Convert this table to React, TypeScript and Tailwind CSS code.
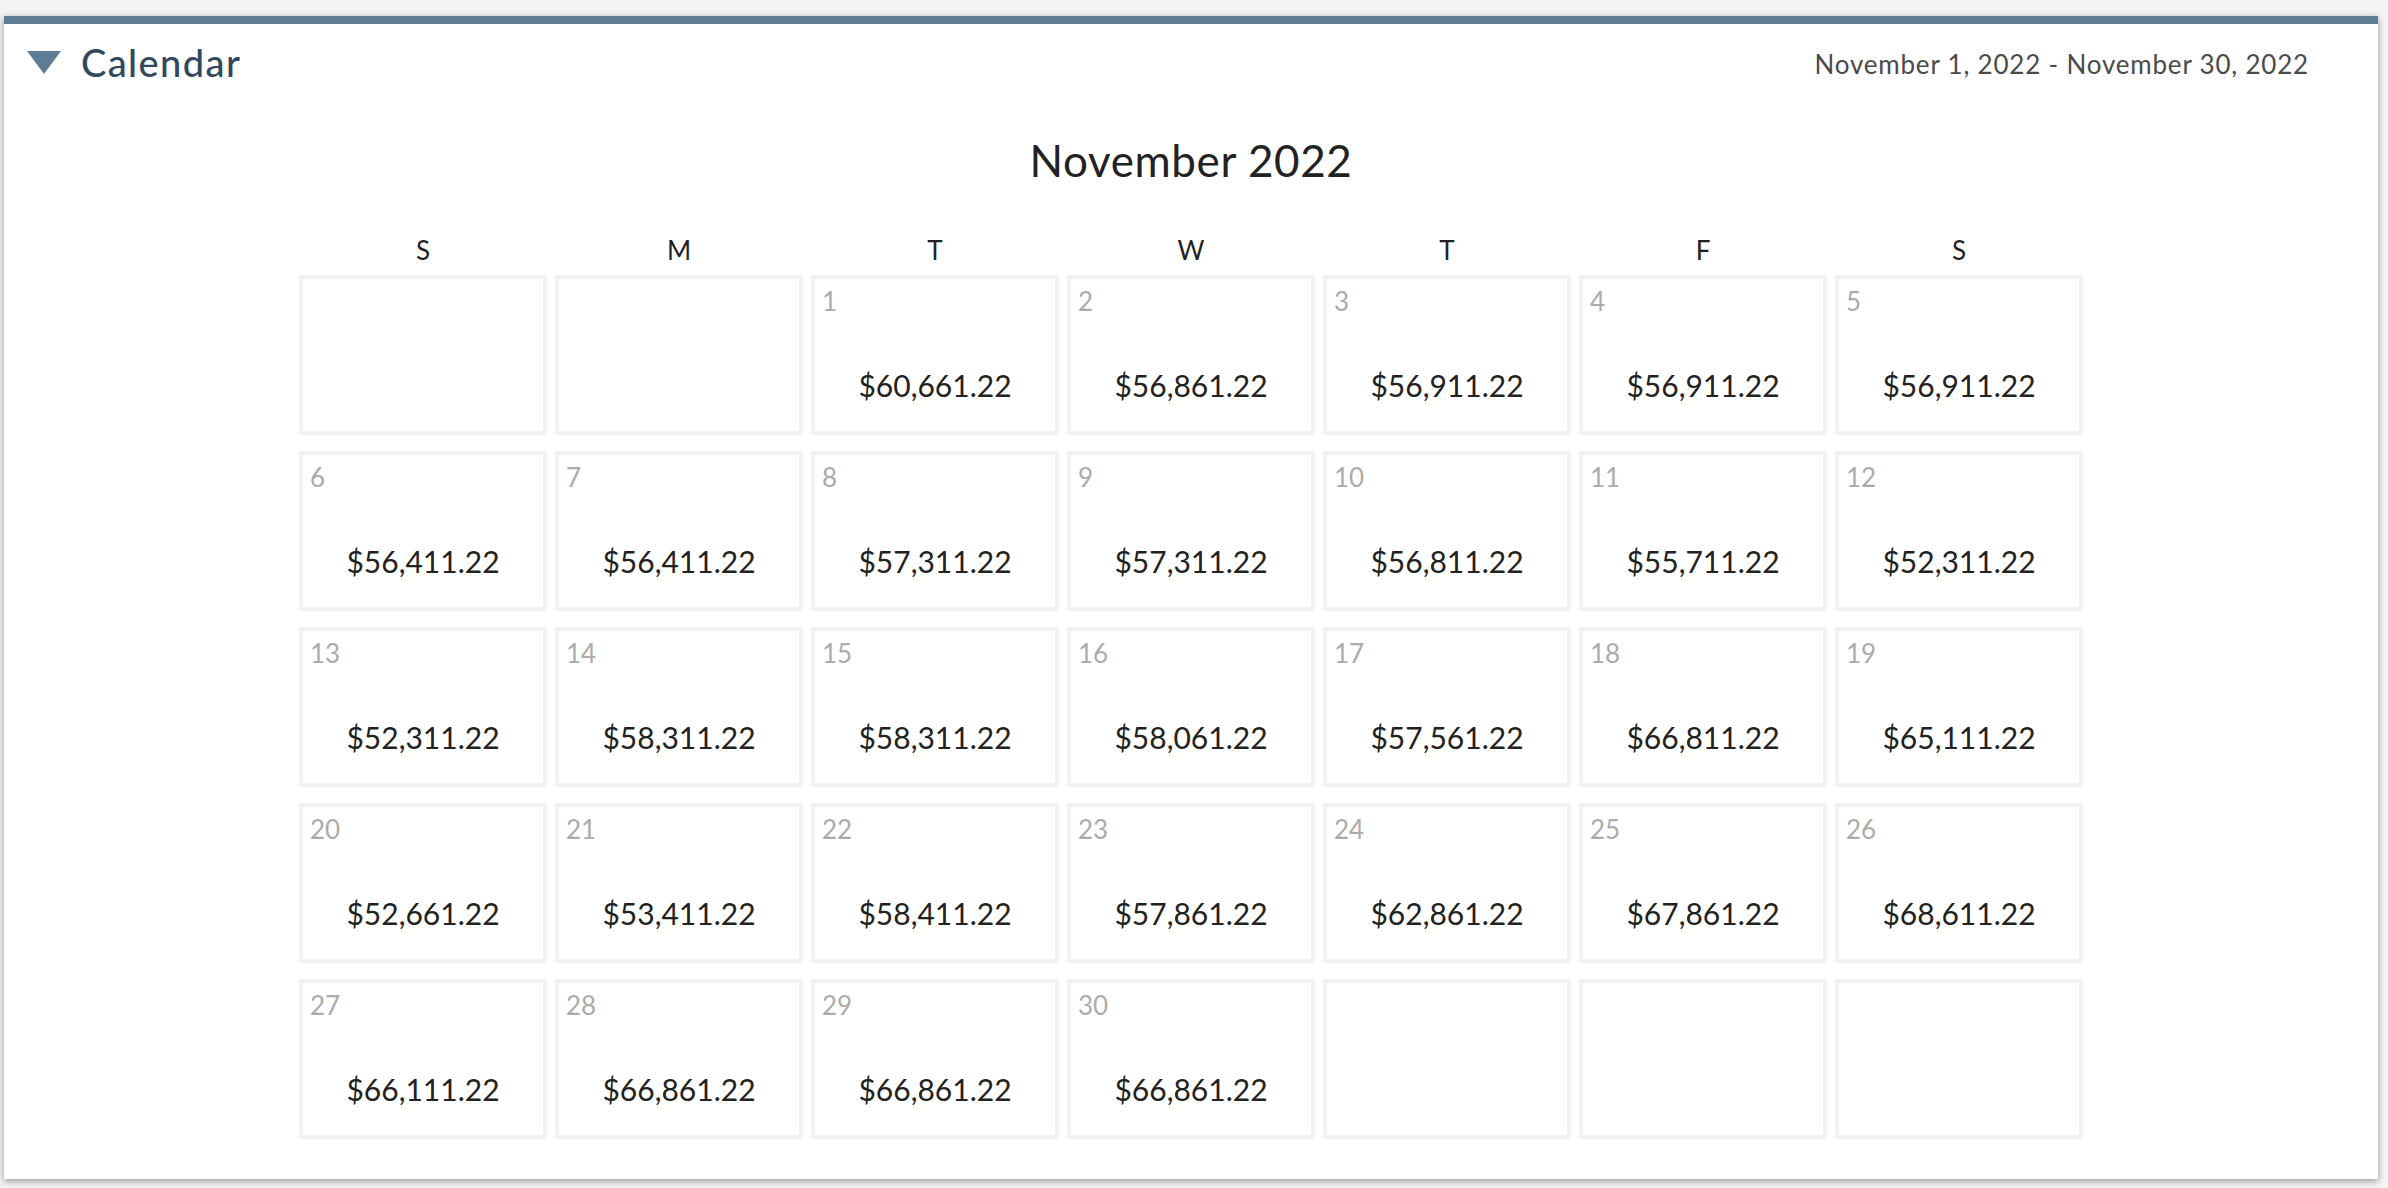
import React from "react";

type Day = { n: number; amount: string } | null;

const weeks: Day[][] = [
  [null, null, { n: 1, amount: "$60,661.22" }, { n: 2, amount: "$56,861.22" }, { n: 3, amount: "$56,911.22" }, { n: 4, amount: "$56,911.22" }, { n: 5, amount: "$56,911.22" }],
  [{ n: 6, amount: "$56,411.22" }, { n: 7, amount: "$56,411.22" }, { n: 8, amount: "$57,311.22" }, { n: 9, amount: "$57,311.22" }, { n: 10, amount: "$56,811.22" }, { n: 11, amount: "$55,711.22" }, { n: 12, amount: "$52,311.22" }],
  [{ n: 13, amount: "$52,311.22" }, { n: 14, amount: "$58,311.22" }, { n: 15, amount: "$58,311.22" }, { n: 16, amount: "$58,061.22" }, { n: 17, amount: "$57,561.22" }, { n: 18, amount: "$66,811.22" }, { n: 19, amount: "$65,111.22" }],
  [{ n: 20, amount: "$52,661.22" }, { n: 21, amount: "$53,411.22" }, { n: 22, amount: "$58,411.22" }, { n: 23, amount: "$57,861.22" }, { n: 24, amount: "$62,861.22" }, { n: 25, amount: "$67,861.22" }, { n: 26, amount: "$68,611.22" }],
  [{ n: 27, amount: "$66,111.22" }, { n: 28, amount: "$66,861.22" }, { n: 29, amount: "$66,861.22" }, { n: 30, amount: "$66,861.22" }, null, null, null],
];

const weekdays = ["S", "M", "T", "W", "T", "F", "S"];

function DayCell({ day }: { day: Day }) {
  return (
    <div className="h-[160px] border-4 border-[#f2f2f2] bg-white flex flex-col">
      {day && (
        <>
          <div className="pl-[7px] pt-[9px] text-[26px] leading-[26px] text-[#ababab]">{day.n}</div>
          <div className="mt-[56px] text-center text-[30px] leading-[30px] text-[#222]">{day.amount}</div>
        </>
      )}
    </div>
  );
}

export default function App() {
  return (
    <div className="min-h-screen bg-[#f4f4f4] pt-4 pl-1 pr-[10px] font-['Lato','Liberation_Sans',sans-serif]">
      <div className="bg-white border-t-8 border-[#5f7e96] shadow-[0_2px_7px_rgba(0,0,0,0.4)] h-[1163px]">
        <div className="flex h-[76px] items-center justify-between pl-[23px] pr-[69px]">
          <div className="flex items-center gap-5">
            <svg width="34" height="23" viewBox="0 0 34 23">
              <polygon points="0,0 34,0 17,23" fill="#5f7e96" />
            </svg>
            <span className="text-[38px] tracking-[1.4px] font-medium text-[#30495c]">Calendar</span>
          </div>
          <span className="pt-1 text-[26px] tracking-[0.8px] text-[#4a4a4a]">November 1, 2022 - November 30, 2022</span>
        </div>

        <div className="mt-[38px] text-center text-[44px] leading-[44px] tracking-[0.6px] text-[#222]">November 2022</div>

        <div className="mx-auto w-[1784px]">
          <div className="mt-[55px] mb-3 grid grid-cols-7 gap-x-2">
            {weekdays.map((d, i) => (
              <div key={i} className="text-center text-[26px] leading-[26px] text-[#222]">
                {d}
              </div>
            ))}
          </div>
          <div className="grid grid-cols-7 gap-x-2 gap-y-4">
            {weeks.flat().map((day, i) => (
              <DayCell key={i} day={day} />
            ))}
          </div>
        </div>
      </div>
    </div>
  );
}
